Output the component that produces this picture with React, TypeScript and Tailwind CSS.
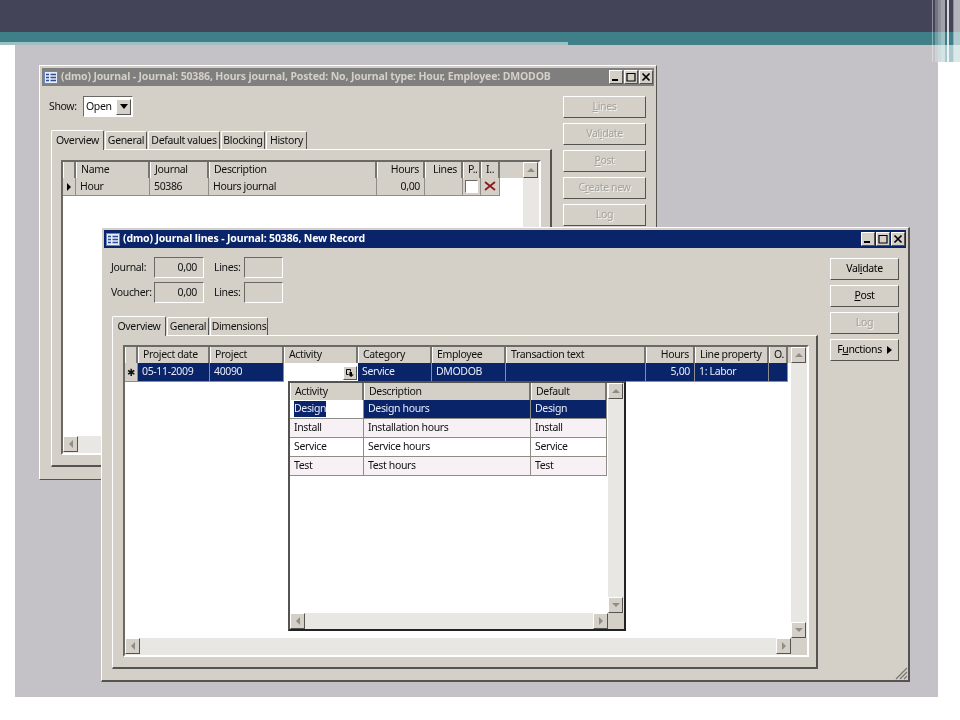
import type { ReactNode } from 'react';

const raised = 'border border-t-white border-l-white border-r-[#55534f] border-b-[#55534f]';
const sunken = 'border border-t-[#6b6964] border-l-[#6b6964] border-r-white border-b-white';

function TitleIcon() {
  return (
    <svg width="14" height="13" viewBox="0 0 14 13" className="shrink-0">
      <rect x="0.5" y="0.5" width="13" height="12" fill="#e6ecf8" stroke="#6f86bd" />
      <path d="M2 3.5h3M2 6.5h3M2 9.5h3M6.5 3.5h5.5M6.5 6.5h5.5M6.5 9.5h5.5" stroke="#2f4d96" strokeWidth="1.5" />
    </svg>
  );
}

function CaptionButton({ kind }: { kind: 'min' | 'max' | 'close' }) {
  return (
    <div className={`w-[14px] h-[14px] bg-[#d4d0c8] flex items-center justify-center ${raised}`}>
      <svg width="10" height="10" viewBox="0 0 10 10">
        {kind === 'min' && <rect x="1" y="7" width="6" height="2" fill="#000" />}
        {kind === 'max' && <path d="M1 1.5h8M1 1v8h8V1" fill="none" stroke="#000" strokeWidth="1.2" />}
        {kind === 'close' && <path d="M1.5 1.5l7 7M8.5 1.5l-7 7" stroke="#000" strokeWidth="1.7" />}
      </svg>
    </div>
  );
}

function TitleBar({ title, active }: { title: string; active?: boolean }) {
  return (
    <div className={`h-[18px] flex items-center pl-[2px] pr-[1px] gap-[3px] ${active ? 'bg-[#0a246a] text-white' : 'bg-[#7f7f7f] text-[#d4d0c8]'}`}>
      <TitleIcon />
      <span className="text-[10.5px] tracking-[-0.15px] font-bold flex-1 whitespace-nowrap">{title}</span>
      <div className="flex">
        <CaptionButton kind="min" />
        <div className="w-px" />
        <CaptionButton kind="max" />
        <div className="w-px" />
        <CaptionButton kind="close" />
      </div>
    </div>
  );
}

function SideButton({ children, disabled }: { children: ReactNode; disabled?: boolean }) {
  return (
    <div className={`h-[22px] flex items-center justify-center bg-[#d4d0c8] text-[10.5px] whitespace-nowrap ${raised} ${disabled ? 'text-[#a5a29b] [text-shadow:1px_1px_0_#f4f2ee]' : 'text-black'}`}>
      {children}
    </div>
  );
}

function Tab({ label, width, active }: { label: string; width: string; active?: boolean }) {
  return (
    <div
      className={`${width} flex items-center justify-center whitespace-nowrap text-[10.5px] text-[#111] border-t border-l border-t-white border-l-white border-r border-r-[#55534f] rounded-t-[2px] ${
        active ? 'h-[20px] bg-[#d4d0c8] -mb-px relative z-10' : 'h-[18px]'
      }`}
    >
      {label}
    </div>
  );
}

function ScrollButton({ dir }: { dir: 'up' | 'down' | 'left' | 'right' }) {
  const d = { up: 'M5 3l4 4H1z', down: 'M5 7L1 3h8z', left: 'M3 5l4-4v8z', right: 'M7 5L3 1v8z' }[dir];
  return (
    <div className={`w-[15px] h-[16px] shrink-0 bg-[#d4d0c8] flex items-center justify-center ${raised}`}>
      <svg width="10" height="10" viewBox="0 0 10 10">
        <path d={d} fill="#8f8d88" />
      </svg>
    </div>
  );
}

function HeadCell({ width, children, right }: { width: string; children?: ReactNode; right?: boolean }) {
  return (
    <div className={`${width} h-full shrink-0 flex items-center px-[4px] whitespace-nowrap bg-[#d4d0c8] text-[10.5px] text-[#111] border-r-2 border-r-[#77756f] border-l border-l-white ${right ? 'justify-end' : ''}`}>
      {children}
    </div>
  );
}

function BodyCell({ width, children, right, tone }: { width: string; children?: ReactNode; right?: boolean; tone: string }) {
  return (
    <div className={`${width} h-full shrink-0 flex items-center px-[4px] whitespace-nowrap text-[10.5px] border-r border-r-[#8f8d88] border-b border-b-[#8f8d88] ${tone} ${right ? 'justify-end' : ''}`}>
      {children}
    </div>
  );
}

function JournalWindow() {
  const gray = 'bg-[#d4d0c8] text-[#111]';
  return (
    <div className={`absolute left-[39px] top-[65px] w-[618px] h-[415px] p-[2px] bg-[#d4d0c8] ${raised}`}>
      <TitleBar title="(dmo) Journal - Journal: 50386, Hours journal, Posted: No, Journal type: Hour, Employee: DMODOB" />
      <div className="flex pl-[7px] pt-[10px]">
        <div className="w-[503px]">
          <div className="flex items-center h-[21px] text-[10.5px] text-[#111]">
            <span className="w-[34px]">Show:</span>
            <div className={`w-[50px] h-full flex items-center justify-between bg-white pl-[2px] pr-px ${sunken}`}>
              Open
              <div className={`w-[15px] h-[16px] bg-[#d4d0c8] flex items-center justify-center ${raised}`}>
                <svg width="8" height="5" viewBox="0 0 8 5"><path d="M0 0h8L4 5z" fill="#000" /></svg>
              </div>
            </div>
          </div>
          <div className="flex items-end ml-[2px] mt-[13px] gap-px">
            <Tab label="Overview" width="w-[53px]" active />
            <Tab label="General" width="w-[42px]" />
            <Tab label="Default values" width="w-[72px]" />
            <Tab label="Blocking" width="w-[44px]" />
            <Tab label="History" width="w-[41px]" />
          </div>
          <div className="ml-[2px] h-[318px] border-t border-l border-t-white border-l-white border-r-2 border-r-[#55534f] border-b-2 border-b-[#55534f] pl-[9px] pt-[10px]">
            <div className={`h-[295px] w-[480px] flex flex-col bg-white ${sunken} border-2`}>
              <div className="flex-1 flex min-h-0">
                <div className="flex-1 min-w-0">
                  <div className="h-[16px] flex bg-[#d4d0c8]">
                    <HeadCell width="w-[13px]" />
                    <HeadCell width="w-[74px]">Name</HeadCell>
                    <HeadCell width="w-[59px]">Journal</HeadCell>
                    <HeadCell width="w-[168px]">Description</HeadCell>
                    <HeadCell width="w-[48px]" right>Hours</HeadCell>
                    <HeadCell width="w-[38px]" right>Lines</HeadCell>
                    <HeadCell width="w-[18px]">P..</HeadCell>
                    <HeadCell width="w-[19px]">I..</HeadCell>
                  </div>
                  <div className="h-[18px] flex">
                    <BodyCell width="w-[13px]" tone={gray}>
                      <svg width="6" height="8" viewBox="0 0 6 8" className="-ml-[1px] shrink-0"><path d="M1 0l4 4-4 4z" fill="#000" /></svg>
                    </BodyCell>
                    <BodyCell width="w-[74px]" tone={gray}>Hour</BodyCell>
                    <BodyCell width="w-[59px]" tone={gray}>50386</BodyCell>
                    <BodyCell width="w-[168px]" tone={gray}>Hours journal</BodyCell>
                    <BodyCell width="w-[48px]" right tone={gray}>0,00</BodyCell>
                    <BodyCell width="w-[38px]" tone={gray} />
                    <BodyCell width="w-[18px]" tone={gray}>
                      <div className={`w-[13px] h-[13px] shrink-0 bg-white -ml-[2px] ${sunken}`} />
                    </BodyCell>
                    <BodyCell width="w-[19px]" tone={gray}>
                      <svg width="12" height="10" viewBox="0 0 12 10" className="-ml-[1px] -mt-[2px] shrink-0">
                        <path d="M1 1l10 8M11 1L1 9" stroke="#8a1a1a" strokeWidth="1.8" />
                      </svg>
                    </BodyCell>
                  </div>
                </div>
                <div className="w-[16px] shrink-0 bg-[#e9e7e3]">
                  <ScrollButton dir="up" />
                </div>
              </div>
              <div className="h-[17px] shrink-0 flex bg-[#e9e7e3]">
                <ScrollButton dir="left" />
              </div>
            </div>
          </div>
        </div>
        <div className="ml-[11px] w-[83px] flex flex-col gap-[5px]">
          <SideButton disabled><span><u>L</u>ines</span></SideButton>
          <SideButton disabled><span>Val<u>i</u>date</span></SideButton>
          <SideButton disabled><span><u>P</u>ost</span></SideButton>
          <SideButton disabled><span>C<u>r</u>eate new</span></SideButton>
          <SideButton disabled><span>Lo<u>g</u></span></SideButton>
        </div>
      </div>
    </div>
  );
}

function LinesWindow() {
  const sel = 'bg-[#0a246a] text-[#e8ecf8]';
  return (
    <div className={`absolute left-[101px] top-[227px] w-[809px] h-[455px] p-[2px] bg-[#d4d0c8] ${raised} border-r-2 border-b-2`}>
      <TitleBar active title="(dmo) Journal lines - Journal: 50386, New Record" />
      <div className="flex pl-[7px] pt-[9px]">
        <div className="w-[707px]">
          <div className="grid grid-cols-[43px_50px_10px_30px_39px] grid-rows-[21px_21px] gap-y-[4px] w-fit text-[10.5px] text-[#111] items-center">
            <span>Journal:</span>
            <div className={`h-full bg-[#d4d0c8] flex items-center justify-end pr-[6px] ${sunken}`}>0,00</div>
            <span />
            <span>Lines:</span>
            <div className={`h-full ${sunken}`} />
            <span>Voucher:</span>
            <div className={`h-full bg-[#d4d0c8] flex items-center justify-end pr-[6px] ${sunken}`}>0,00</div>
            <span />
            <span>Lines:</span>
            <div className={`h-full ${sunken}`} />
          </div>
          <div className="flex items-end ml-[1px] mt-[13px] gap-px">
            <Tab label="Overview" width="w-[54px]" active />
            <Tab label="General" width="w-[42px]" />
            <Tab label="Dimensions" width="w-[58px]" />
          </div>
          <div className="ml-[1px] h-[334px] border-t border-l border-t-white border-l-white border-r-2 border-r-[#55534f] border-b-2 border-b-[#55534f] pl-[10px] pt-[9px]">
            <div className={`relative h-[312px] w-[686px] flex flex-col bg-white ${sunken} border-2`}>
              <div className="flex-1 flex min-h-0">
                <div className="flex-1 min-w-0">
                  <div className="h-[16px] flex bg-[#d4d0c8]">
                    <HeadCell width="w-[13px]" />
                    <HeadCell width="w-[72px]">Project date</HeadCell>
                    <HeadCell width="w-[74px]">Project</HeadCell>
                    <HeadCell width="w-[74px]">Activity</HeadCell>
                    <HeadCell width="w-[74px]">Category</HeadCell>
                    <HeadCell width="w-[74px]">Employee</HeadCell>
                    <HeadCell width="w-[140px]">Transaction text</HeadCell>
                    <HeadCell width="w-[49px]" right>Hours</HeadCell>
                    <HeadCell width="w-[74px]">Line property</HeadCell>
                    <HeadCell width="w-[19px]">O.</HeadCell>
                  </div>
                  <div className="h-[19px] flex">
                    <BodyCell width="w-[13px]" tone="bg-[#d4d0c8] text-[#111]">
                      <span className="text-[10px] -ml-[2px]">✱</span>
                    </BodyCell>
                    <BodyCell width="w-[72px]" tone={sel}>05-11-2009</BodyCell>
                    <BodyCell width="w-[74px]" tone={sel}>40090</BodyCell>
                    <div className="w-[74px] h-full shrink-0 bg-white flex items-center justify-end pr-px">
                      <div className={`w-[14px] h-[14px] bg-[#d4d0c8] flex items-center justify-center ${raised}`}>
                        <svg width="8" height="8" viewBox="0 0 8 8">
                          <path d="M0.5 0.5h4v2M0.5 0.5v5h2" fill="none" stroke="#000" strokeWidth="1" />
                          <path d="M3.5 3h2.5v2.5H8L5 8 2.5 5.5h1z" fill="#000" />
                        </svg>
                      </div>
                    </div>
                    <BodyCell width="w-[74px]" tone={sel}>Service</BodyCell>
                    <BodyCell width="w-[74px]" tone={sel}>DMODOB</BodyCell>
                    <BodyCell width="w-[140px]" tone={sel} />
                    <BodyCell width="w-[49px]" right tone={sel}>5,00</BodyCell>
                    <BodyCell width="w-[74px]" tone={sel}>1: Labor</BodyCell>
                    <BodyCell width="w-[19px]" tone={sel} />
                  </div>
                </div>
                <div className="w-[16px] shrink-0 bg-[#e9e7e3] flex flex-col justify-between">
                  <ScrollButton dir="up" />
                  <ScrollButton dir="down" />
                </div>
              </div>
              <div className="h-[17px] shrink-0 flex bg-[#e9e7e3]">
                <ScrollButton dir="left" />
                <div className="flex-1" />
                <ScrollButton dir="right" />
                <div className="w-[16px] bg-[#d4d0c8]" />
              </div>
              <LookupPopup />
            </div>
          </div>
        </div>
        <div className="ml-[12px] mt-px w-[69px] flex flex-col gap-[5px]">
          <SideButton><span>Val<u>i</u>date</span></SideButton>
          <SideButton><span><u>P</u>ost</span></SideButton>
          <SideButton disabled><span>Lo<u>g</u></span></SideButton>
          <SideButton>
            <span className="flex items-center gap-[5px]">
              <span>F<u>u</u>nctions</span>
              <svg width="5" height="8" viewBox="0 0 5 8"><path d="M0 0l5 4-5 4z" fill="#000" /></svg>
            </span>
          </SideButton>
        </div>
      </div>
      <svg width="14" height="14" viewBox="0 0 14 14" className="absolute right-[0px] bottom-[0px]">
        <path d="M2 13L13 2M6 13l7-7M10 13l3-3" stroke="#77756f" strokeWidth="1.2" />
      </svg>
    </div>
  );
}

const lookupRows = [
  ['Install', 'Installation hours', 'Install', 'bg-[#f7f1f6]'],
  ['Service', 'Service hours', 'Service', 'bg-white'],
  ['Test', 'Test hours', 'Test', 'bg-[#f7f1f6]'],
];

function LookupPopup() {
  const sel = 'bg-[#0a246a] text-[#e8ecf8]';
  return (
    <div className="absolute left-[163px] top-[34px] w-[338px] h-[250px] flex flex-col bg-white border-2 border-[#55534f] border-r-[#222] border-b-[#222]">
      <div className="flex-1 flex min-h-0">
        <div className="w-[317px] shrink-0">
          <div className="h-[17px] flex bg-[#d4d0c8]">
            <HeadCell width="w-[74px]">Activity</HeadCell>
            <HeadCell width="w-[167px]">Description</HeadCell>
            <HeadCell width="w-[76px]">Default</HeadCell>
          </div>
          <div className="h-[19px] flex">
            <BodyCell width="w-[74px]" tone="bg-white text-[#111]">
              <span className="bg-[#0a246a] text-[#e8ecf8]">Design</span>
            </BodyCell>
            <BodyCell width="w-[167px]" tone={sel}>Design hours</BodyCell>
            <BodyCell width="w-[76px]" tone={sel}>Design</BodyCell>
          </div>
          {lookupRows.map(([a, b, c, bg]) => (
            <div key={a} className="h-[19px] flex">
              <BodyCell width="w-[74px]" tone={`${bg} text-[#111]`}>{a}</BodyCell>
              <BodyCell width="w-[167px]" tone={`${bg} text-[#111]`}>{b}</BodyCell>
              <BodyCell width="w-[76px]" tone={`${bg} text-[#111]`}>{c}</BodyCell>
            </div>
          ))}
        </div>
        <div className="flex-1 ml-[1px] bg-[#e9e7e3] flex flex-col justify-between">
          <ScrollButton dir="up" />
          <ScrollButton dir="down" />
        </div>
      </div>
      <div className="h-[16px] shrink-0 flex bg-[#e9e7e3]">
        <ScrollButton dir="left" />
        <div className="flex-1" />
        <ScrollButton dir="right" />
        <div className="w-[16px] bg-[#d4d0c8]" />
      </div>
    </div>
  );
}

function CornerStripes() {
  return (
    <div className="absolute right-0 top-0 w-[28px] h-[62px] flex">
      <div className="w-px bg-white/40" />
      <div className="w-[2px]" />
      <div className="w-[3px] bg-white/25" />
      <div className="w-[3px] bg-white/40" />
      <div className="w-[4px] bg-white/50" />
      <div className="w-[2px]" />
      <div className="w-[2px] bg-white/80" />
      <div className="w-[4px]" />
      <div className="w-px bg-white/40" />
      <div className="flex-1 bg-white/60" />
    </div>
  );
}

export default function App() {
  return (
    <div className="relative w-[960px] h-[720px] overflow-hidden bg-white font-['Noto_Sans',sans-serif] tracking-[-0.35px] blur-[0.3px]">
      <div className="h-[32px] bg-[#444458]" />
      <div className="h-[13px] bg-[#3f8088] flex items-end">
        <div className="w-[568px] h-[3px] bg-[#9cc0c4]" />
      </div>
      <div className="flex">
        <div className="ml-[15px] w-[923px] h-[652px] bg-[#c4c2c6]" />
        <div className="flex-1 h-[17px] bg-[#a8c8cc]" />
      </div>
      <CornerStripes />
      <JournalWindow />
      <LinesWindow />
    </div>
  );
}
